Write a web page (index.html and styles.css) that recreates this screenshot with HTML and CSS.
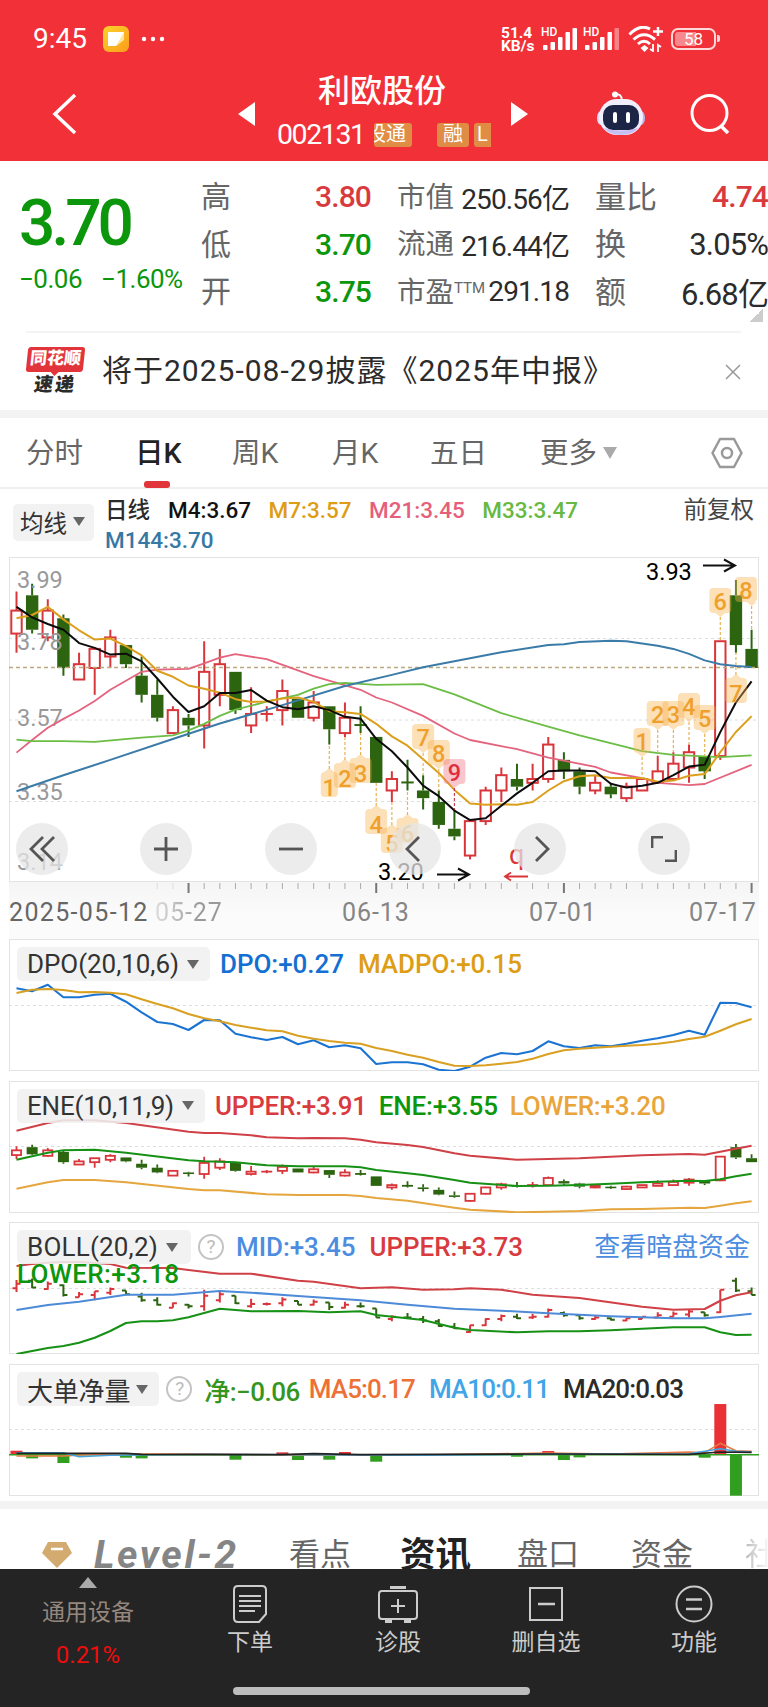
FILE: index.html
```
<!DOCTYPE html>
<html lang="zh-CN">
<head>
  <meta charset="UTF-8">
  <title>利欧股份 002131</title>
  <link rel="stylesheet" href="styles.css">
</head>
<body>

  <header class="top">
    <div class="status">
      <span class="clock">9:45</span>
      <svg class="note" width="26" height="26" viewBox="0 0 26 26">
        <defs><linearGradient id="noteFill" x1="0" y1="0" x2="1" y2="1"><stop offset="0" stop-color="#fbd32c"/><stop offset="1" stop-color="#fb9c1c"/></linearGradient></defs>
        <rect width="26" height="26" rx="6" fill="url(#noteFill)"/>
        <path d="M5 6h16v7L13 20H5z" fill="#fff"/>
        <path d="M21 6v8l-8 6z" fill="#ffe3a0"/>
      </svg>
      <svg width="24" height="6" viewBox="0 0 24 6" fill="#fff"><circle cx="3" cy="3" r="2.2"/><circle cx="12" cy="3" r="2.2"/><circle cx="21" cy="3" r="2.2"/></svg>
      <div class="speed"><span>51.4</span><span>KB/s</span></div>
      <svg width="78" height="26" viewBox="0 0 78 26" fill="#fff">
        <text x="0" y="10" class="hd">HD</text>
        <rect x="2" y="19" width="4.500" height="5" rx="1"/><rect x="9.500" y="16" width="4.500" height="8" rx="1"/><rect x="17" y="11" width="4.500" height="13" rx="1"/><rect x="24.500" y="6" width="4.500" height="18" rx="1"/><rect x="31.500" y="2" width="4.500" height="22" rx="1"/>
        <text x="42" y="10" class="hd">HD</text>
        <rect x="44" y="19" width="4.500" height="5" rx="1"/><rect x="51.500" y="16" width="4.500" height="8" rx="1"/><rect x="59" y="11" width="4.500" height="13" rx="1"/><rect x="66.500" y="6" width="4.500" height="18" rx="1"/><rect x="73.500" y="2" width="4.500" height="22" rx="1" opacity=".4"/>
      </svg>
      <svg class="wifi" width="36" height="26" viewBox="0 0 36 26" fill="none" stroke="#fff" stroke-width="3">
        <path d="M1.500 8.500Q12 -2.500 22 3M5.500 13.500Q16 4 27 13.500M10 18Q16 12.500 22 18"/>
        <path d="M16.500 19l4 3-4 4-4-4z" fill="#fff" stroke="none"/>
        <path d="M25 5.500h10M30 1v9" stroke-width="2.500"/>
        <path d="M25 18v7l-3-2M30 26v-7l3 2" stroke-width="1.800"/>
      </svg>
      <span class="battery"><i>58</i></span>
      <span class="battery-tip"></span>
    </div>

    <div class="nav">
      <svg class="back" width="26" height="42" viewBox="0 0 26 42" fill="none" stroke="#fff" stroke-width="3.500"><path d="M23 2L3 21l20 19"/></svg>
      <svg width="17" height="24" viewBox="0 0 17 24"><path d="M17 0v24L0 12z" fill="#fff"/></svg>
      <div class="stock">
        <h1>利欧股份</h1>
        <div class="code">
          <span>002131</span>
          <b class="tag cut"><i>股通</i></b><b class="tag">融</b><b class="tag last">L</b>
        </div>
      </div>
      <svg width="17" height="24" viewBox="0 0 17 24"><path d="M0 0v24l17-12z" fill="#fff"/></svg>
      <svg class="robot" width="48" height="46" viewBox="0 0 48 46">
        <path d="M17 3q8-1 8 7" fill="none" stroke="#fff" stroke-width="2"/><circle cx="18" cy="3.500" r="3" fill="#fff"/>
        <ellipse cx="4" cy="27" rx="4" ry="7" fill="#dcd8fb"/><ellipse cx="44" cy="27" rx="4" ry="7" fill="#b9b6f5"/>
        <rect x="2" y="8" width="44" height="36" rx="18" fill="#f1eefe"/>
        <path d="M7 37q17 5 34 0-5 7-17 7T7 37z" fill="#c6bdf3"/>
        <rect x="6" y="14" width="36" height="25" rx="10" fill="#1d2547"/>
        <rect x="16" y="21" width="4" height="11" rx="2" fill="#fff"/><rect x="29" y="21" width="4" height="11" rx="2" fill="#fff"/>
      </svg>
      <svg class="search" width="40" height="40" viewBox="0 0 40 40" fill="none" stroke="#fff" stroke-width="3"><circle cx="19.500" cy="19" r="17.500"/><path d="M31 32l7 7" stroke-width="3.500"/></svg>
    </div>
  </header>

  <section class="quote">
    <div class="price down">
      <strong>3.70</strong>
      <p><span>−0.06</span><span>−1.60%</span></p>
    </div>
    <dl class="facts first">
      <div><dt>高</dt><dd class="up">3.80</dd></div>
      <div><dt>低</dt><dd class="down">3.70</dd></div>
      <div><dt>开</dt><dd class="down">3.75</dd></div>
    </dl>
    <dl class="facts middle">
      <div><dt>市值</dt><dd>250.56亿</dd></div>
      <div><dt>流通</dt><dd>216.44亿</dd></div>
      <div><dt>市盈<sup>TTM</sup></dt><dd>291.18</dd></div>
    </dl>
    <dl class="facts end">
      <div><dt>量比</dt><dd class="up">4.74</dd></div>
      <div><dt>换</dt><dd>3.05%</dd></div>
      <div><dt>额</dt><dd>6.68亿</dd></div>
    </dl>
  </section>
  <div class="fold"></div>

  <section class="notice">
    <div class="brand"><b>同花顺</b><i>速递</i></div>
    <p>将于2025-08-29披露《2025年中报》</p>
    <svg width="16" height="16" viewBox="0 0 16 16" stroke="#999" stroke-width="1.500"><path d="M1 1l14 14M15 1L1 15"/></svg>
  </section>

  <nav class="tabs">
    <span>分时</span>
    <span class="on">日K</span>
    <span>周K</span>
    <span>月K</span>
    <span>五日</span>
    <span class="more">更多</span>
    <svg width="32" height="32" viewBox="0 0 32 32" fill="none" stroke="#999" stroke-width="2.500"><path d="M9 2h14l7.500 14L23 30H9L1.500 16z" stroke-linejoin="round"/><circle cx="16" cy="16" r="5"/></svg>
  </nav>

  <section class="averages">
    <span class="pick">均线</span>
    <p>
      <b>日线</b><span class="m4">M4:3.67</span><span class="m7">M7:3.57</span><span class="m21">M21:3.45</span><span class="m33">M33:3.47</span><br>
      <span class="m144">M144:3.70</span>
    </p>
    <span class="adjust">前复权</span>
  </section>

  <main>
    <div class="panel kline">
      <svg id="kline" width="750" height="325"></svg>
      <div class="tools">
        <button><svg width="26" height="26" viewBox="0 0 26 26"><path d="M14 1L2 13l12 12M25 1L13 13l12 12"/></svg></button>
        <button><svg width="26" height="26" viewBox="0 0 26 26"><path d="M13 1v24M1 13h24"/></svg></button>
        <button><svg width="26" height="26" viewBox="0 0 26 26"><path d="M1 13h24"/></svg></button>
        <button><svg width="26" height="26" viewBox="0 0 26 26"><path d="M17 1L5 13l12 12"/></svg></button>
        <button><svg width="26" height="26" viewBox="0 0 26 26"><path d="M9 1l12 12L9 25"/></svg></button>
        <button><svg width="26" height="26" viewBox="0 0 26 26"><path d="M1 12V1h11M25 14v11H14"/></svg></button>
      </div>
    </div>
    <div class="dates">
      <svg id="ticks" width="750" height="14"></svg>
      <div class="days"><b>2025-05-12</b><span class="faded">05-27</span><span>06-13</span><span>07-01</span><span>07-17</span></div>
    </div>

    <div class="panel">
      <svg id="dpo" width="750" height="132"></svg>
      <div class="legend"><span class="pick">DPO(20,10,6)</span><span class="blue">DPO:+0.27</span><span class="m7">MADPO:+0.15</span></div>
    </div>

    <div class="panel">
      <svg id="ene" width="750" height="132"></svg>
      <div class="legend ene"><span class="pick">ENE(10,11,9)</span><span class="up">UPPER:+3.91</span><span class="down">ENE:+3.55</span><span class="amber">LOWER:+3.20</span></div>
    </div>

    <div class="panel">
      <svg id="boll" width="750" height="132"></svg>
      <div class="legend boll"><span class="pick">BOLL(20,2)</span><em>?</em><span class="sky">MID:+3.45</span><span class="up">UPPER:+3.73</span><a>查看暗盘资金</a><span class="down wrap">LOWER:+3.18</span></div>
    </div>

    <div class="panel">
      <svg id="flow" width="750" height="132"></svg>
      <div class="legend flow"><span class="pick">大单净量</span><em>?</em><span class="net">净:−0.06</span><span class="orange">MA5:0.17</span><span class="cyan">MA10:0.11</span><span>MA20:0.03</span></div>
    </div>
  </main>

  <nav class="sections">
    <svg width="30" height="26" viewBox="0 0 30 26"><path d="M6 0h18l6 11-15 15L0 11z" fill="#d3ab70"/><path d="M9 7h12" stroke="#fff" stroke-width="2.500"/></svg>
    <span class="level">Level-2</span>
    <span>看点</span>
    <span class="on">资讯</span>
    <span>盘口</span>
    <span>资金</span>
    <span class="next">社</span>
  </nav>

  <footer>
    <div class="bar">
      <div class="device"><i></i><span>通用设备</span><b>0.21%</b></div>
      <div class="item">
        <svg width="40" height="40" viewBox="0 0 40 40"><path d="M8 2h24q4 0 4 4v24l-7 8H8q-4 0-4-4V6q0-4 4-4zM9 12h22M9 17h22M9 22h22M9 27h16"/></svg>
        <span>下单</span>
      </div>
      <div class="item">
        <svg width="40" height="40" viewBox="0 0 40 40"><path d="M4 7h32q3 0 3 3v22q0 3-3 3H4q-3 0-3-3V10q0-3 3-3zM20 15v14M13 22h14"/><path d="M12 3.500h16M7 37.500h7M26 37.500h7" stroke-width="3"/></svg>
        <span>诊股</span>
      </div>
      <div class="item">
        <svg width="40" height="40" viewBox="0 0 40 40"><path d="M4 4h32v32H4z"/><path d="M12 20h17" stroke-width="2.500"/></svg>
        <span>删自选</span>
      </div>
      <div class="item">
        <svg width="40" height="40" viewBox="0 0 40 40"><circle cx="20" cy="20" r="17.500"/><path d="M12 15.500h16M12 25h16" stroke-width="2.500"/></svg>
        <span>功能</span>
      </div>
    </div>
    <div class="home"></div>
  </footer>

  <script src="script.js"></script>
</body>
</html>
```

FILE: styles.css
```
* {
  box-sizing: border-box;
}

body {
  margin: 0;
  width: 768px;
  height: 1707px;
  overflow: hidden;
  background: #fff;
  color: #2b2b2b;
  font-family: Roboto, "Noto Sans CJK SC", sans-serif;
}

h1, p, dl, dd {
  margin: 0;
}

svg {
  display: block;
  flex: none;
}

.up { color: #d93a3e; }
.down { color: #0b960b; }
.m4 { color: #111; }
.m7 { color: #dd9d14; }
.m21 { color: #e65f7a; }
.m33 { color: #68b93f; }
.m144 { color: #3578a4; }
.blue { color: #1370d2; }
.sky { color: #4c8de0; }
.amber { color: #e9a53a; }
.net { color: #35951f; }
.orange { color: #ed7137; }
.cyan { color: #41a5e8; }

/* header */
.top {
  height: 161px;
  background: #f23038;
  color: #fff;
}

.status {
  display: flex;
  align-items: center;
  height: 77px;
  padding: 0 48px 0 33px;
}

.clock {
  width: 70px;
  font-size: 28px;
}

.note {
  margin-right: 12px;
}

.speed {
  display: flex;
  flex-direction: column;
  width: 35px;
  margin: 2px 5px 0 auto;
  font-size: 15.500px;
  font-weight: 700;
  line-height: 12.500px;
  white-space: nowrap;
}

.hd {
  font-size: 12px;
  font-weight: 500;
}

.wifi {
  margin: 0 7px 0 9px;
}

.battery {
  width: 45px;
  height: 22px;
  padding: 2px;
  border: 2px solid #ffd9da;
  border-radius: 7px;
}

.battery i {
  display: block;
  border-radius: 3px;
  background: linear-gradient(90deg, #f7888d 56%, transparent 56%);
  font-size: 17px;
  font-style: normal;
  line-height: 14px;
  text-align: center;
}

.battery-tip {
  width: 3px;
  height: 7px;
  margin-left: 1px;
  border-radius: 0 2px 2px 0;
  background: #ffd9da;
}

.nav {
  display: flex;
  align-items: center;
  height: 73px;
  padding: 0 38px 0 52px;
}

.back {
  margin-right: 160px;
}

.stock {
  width: 257px;
  padding-left: 22px;
}

.stock h1 {
  padding-left: 41px;
  font-size: 32px;
  font-weight: 500;
  line-height: 36px;
}

.code {
  display: flex;
  align-items: center;
  height: 45px;
  padding-top: 6px;
}

.code span {
  width: 97px;
  font-size: 28.500px;
  letter-spacing: -1.400px;
}

.tag {
  width: 32px;
  height: 24px;
  margin-right: 5px;
  border-radius: 3px;
  background: #e08c45;
  font-size: 20px;
  font-weight: 400;
  line-height: 23px;
  text-align: center;
}

.tag.cut {
  display: flex;
  justify-content: flex-end;
  width: 38px;
  margin-right: 25px;
  padding-right: 6px;
  overflow: hidden;
}

.tag i {
  flex: none;
  font-style: normal;
  white-space: nowrap;
}

.tag.last {
  width: 17px;
  margin: 0;
  border-radius: 3px 0 0 3px;
}

.robot {
  margin: 0 45px 0 69px;
}

/* quote */
.quote {
  display: flex;
  height: 148px;
  padding-top: 12px;
}

.price {
  width: 201px;
  padding: 11px 0 0 19px;
}

.price strong {
  display: block;
  font-size: 64px;
  font-weight: 500;
  line-height: 80px;
  letter-spacing: -4px;
}

.price p {
  display: flex;
  gap: 19px;
  margin-top: -3px;
  font-size: 26px;
  line-height: 36px;
  letter-spacing: -.500px;
  white-space: nowrap;
}

.facts div {
  display: flex;
  justify-content: space-between;
  align-items: center;
  height: 47.500px;
}

.facts dt {
  margin-top: -5px;
  color: #666;
  font-size: 30px;
  white-space: nowrap;
}

.facts dd {
  font-size: 30px;
  font-weight: 500;
  letter-spacing: -.900px;
  white-space: nowrap;
}

.facts.first {
  width: 170px;
}

.facts.middle {
  width: 172px;
  margin-left: 26px;
}

.middle dt {
  font-size: 28.500px;
}

.middle dd {
  font-size: 28px;
  font-weight: 400;
  letter-spacing: -.900px;
}

.facts sup {
  font-size: 15px;
  line-height: 0;
  vertical-align: 9px;
}

.facts.end {
  width: 173px;
  margin-left: 26px;
}

.end dt {
  font-size: 31px;
}

.end dd {
  font-weight: 400;
  font-size: 31px;
}

.end .up {
  font-weight: 500;
  font-size: 30px;
}

.fold {
  width: 13px;
  height: 13px;
  margin-left: 750px;
  background: linear-gradient(135deg, transparent 50%, #ccc 50%);
}

.notice {
  display: flex;
  align-items: center;
  height: 79px;
  margin: 9px 27px 0 26px;
  border-top: 2px solid #f4f4f4;
}

.brand {
  display: flex;
  flex-direction: column;
  align-items: center;
  width: 59px;
  margin-right: 17px;
}

.brand b {
  width: 57px;
  height: 25px;
  border-radius: 3px;
  background: #e2353b;
  color: #fff;
  font-size: 17px;
  font-weight: 900;
  line-height: 23px;
  text-align: center;
  transform: skewX(-6deg);
}

.brand b::after {
  content: "";
  display: block;
  width: 0;
  margin: 1px auto 0;
  border: 5px solid transparent;
  border-top-color: #e2353b;
  border-bottom: 0;
}

.brand i {
  margin-top: 2px;
  font-size: 19px;
  font-style: normal;
  font-weight: 900;
  letter-spacing: 2px;
  line-height: 22px;
  transform: skewX(-8deg);
}

.notice p {
  flex: 1;
  margin-top: -8px;
  font-size: 30px;
  letter-spacing: 1px;
  white-space: nowrap;
}

/* period tabs */
.tabs {
  display: grid;
  grid-template-columns: 109px 97px 100px 98px 110px 171px 32px;
  align-items: center;
  height: 79px;
  padding-left: 26px;
  border-top: 8px solid #f3f3f3;
  border-bottom: 2px solid #f0f0f0;
  color: #666;
  font-size: 28.500px;
}

.tabs span {
  height: 69px;
  line-height: 71px;
}

.tabs .on {
  color: #222;
  font-weight: 500;
}

.tabs .on::after {
  content: "";
  display: block;
  width: 26px;
  height: 7px;
  margin: -8px 0 0 9px;
  border-radius: 3px;
  background: #e2353b;
}

.more::after {
  content: "";
  display: inline-block;
  margin: 0 0 4px 6px;
  border: 7px solid transparent;
  border-top: 12px solid #aaa;
  border-bottom: 0;
}

/* moving averages */
.averages {
  display: flex;
  height: 68px;
  padding: 6px 14px 0 13px;
}

.pick {
  display: flex;
  align-items: center;
  gap: 8px;
  border-radius: 5px;
  background: rgba(240, 240, 240, .88);
  color: #333;
}

.pick::after {
  content: "";
  border: 6px solid transparent;
  border-top: 9px solid #666;
  border-bottom: 0;
}

.averages .pick {
  width: 81px;
  height: 37px;
  margin: 9px 11px 0 0;
  padding: 0 0 2px 7px;
  gap: 6px;
  font-size: 23.500px;
}

.averages p {
  flex: 1;
  font-size: 22.500px;
  font-weight: 500;
  line-height: 30px;
  white-space: nowrap;
}

.averages b {
  margin-right: 18px;
  font-weight: 500;
}

.averages p span {
  margin-right: 17.500px;
}

.adjust {
  color: #444;
  font-size: 23.500px;
  line-height: 30px;
}

/* charts */
main {
  padding: 0 9px;
}

.panel {
  display: grid;
  height: 132px;
  margin-bottom: 9.700px;
}

.panel > * {
  grid-area: 1 / 1;
}

.panel svg text {
  font-size: 23.500px;
}

.kline {
  height: 325px;
  margin: 0;
}

.tools {
  display: flex;
  align-self: end;
  gap: 72.400px;
  padding: 0 0 7px 7px;
}

.tools button {
  display: flex;
  justify-content: center;
  align-items: center;
  width: 52px;
  height: 52px;
  padding: 0;
  border: 0;
  border-radius: 50%;
  background: rgba(230, 230, 230, .75);
}

.tools svg {
  fill: none;
  stroke: #555;
  stroke-width: 2.800;
}

.dates {
  height: 57px;
  background: linear-gradient(#f5f5f5, #fbfbfb 60%);
}

.days {
  display: grid;
  grid-template-columns: 146px 187px 187px 160px 70px;
  color: #858585;
  font-size: 25px;
  line-height: 34px;
  letter-spacing: .900px;
  white-space: nowrap;
}

.days b {
  color: #666;
  font-weight: 400;
  letter-spacing: 1.350px;
}

.faded {
  background: linear-gradient(90deg, #ddd, #999 45px);
  background-clip: text;
  color: transparent;
}

.legend {
  display: flex;
  align-items: center;
  align-self: start;
  height: 34px;
  margin: 8px 0 0 8px;
  gap: 14px;
  font-size: 26px;
  font-weight: 500;
  letter-spacing: -.050px;
  white-space: nowrap;
}

.legend .pick {
  height: 34px;
  margin-right: -4px;
  padding: 0 11px 0 10px;
  font-weight: 400;
}

.legend em {
  width: 26px;
  height: 26px;
  margin: 0 -2px 0 -3px;
  border: 2px solid #c4c4c4;
  border-radius: 50%;
  color: #bbb;
  font-size: 19px;
  font-style: normal;
  font-weight: 400;
  line-height: 22px;
  text-align: center;
}

.ene {
  gap: 12px;
  letter-spacing: -.200px;
}

.ene .pick {
  margin-right: -2px;
}

.boll {
  flex-wrap: wrap;
  height: auto;
  row-gap: 0;
}

.boll .pick {
  width: 174px;
  letter-spacing: .200px;
}

.boll a {
  margin-left: auto;
  margin-right: 9px;
  color: #4c8de0;
  font-weight: 400;
  line-height: 34px;
}

.boll .wrap {
  width: 100%;
  margin-top: -4px;
  letter-spacing: .400px;
  line-height: 28px;
}

.flow {
  letter-spacing: -.900px;
}

.flow .pick {
  letter-spacing: -.200px;
  gap: 6px;
}

.flow .net {
  letter-spacing: -.500px;
  margin-right: -5px;
}

/* content tabs, cut off by the bottom bar */
.sections {
  display: flex;
  align-items: center;
  height: 67.500px;
  margin-top: -4.500px;
  padding: 32px 0 0 42px;
  border-top: 8px solid #f3f3f3;
  overflow: hidden;
  color: #666;
  font-size: 31px;
  white-space: nowrap;
}

.sections span {
  flex: none;
  margin-right: 52px;
  line-height: 36px;
}

.sections .level {
  width: 143px;
  margin-left: 22px;
  color: #858585;
  font-size: 39px;
  font-style: italic;
  font-weight: 700;
  letter-spacing: 2.600px;
}

.sections .on {
  margin: 0 46px 0 -3px;
  color: #222;
  font-size: 35.500px;
  font-weight: 700;
}

.sections .next {
  margin: 0;
  background: linear-gradient(90deg, #bbb, #fff 26px);
  background-clip: text;
  color: transparent;
}

footer {
  height: 138px;
  background: #242424;
  color: #ccc;
}

.bar {
  display: grid;
  grid-template-columns: 176px repeat(4, 148px);
  height: 118px;
  padding-top: 8px;
  font-size: 23px;
}

.device {
  display: flex;
  flex-direction: column;
  align-items: center;
  color: #95877d;
}

.device i {
  margin-bottom: 9px;
  border: 9px solid transparent;
  border-bottom: 11px solid #aaa;
  border-top: 0;
}

.device b {
  margin-top: 12px;
  color: #ee0c0c;
  font-size: 24px;
  font-weight: 400;
}

.device span,
.item span {
  line-height: 32px;
}

.item {
  display: flex;
  flex-direction: column;
  align-items: center;
  gap: 3px;
  padding-top: 7px;
}

.item svg {
  fill: none;
  stroke: #ccc;
  stroke-width: 2;
}

.home {
  width: 297px;
  height: 8px;
  margin-left: 233px;
  border-radius: 4px;
  background: #bdbdbd;
}
```

FILE: script.js
```
const RED = '#d9363b';
const GREEN = '#2c6410';

// open, high, low, close in cents
const bars = [
  [379, 390, 374, 385], [389, 392, 379, 380], [378, 388, 377, 385], [383, 384, 368, 370],
  [367, 374, 367, 371], [370, 375, 363, 375], [373, 380, 370, 378], [376, 376, 370, 371],
  [368, 373, 361, 363], [363, 367, 356, 357], [353, 360, 353, 359], [357, 358, 352, 355],
  [355, 377, 349, 369], [363, 375, 360, 371], [369, 369, 358, 359], [355, 365, 353, 358],
  [358, 360, 356, 358], [359, 367, 355, 364], [362, 362, 357, 357], [357, 364, 356, 361],
  [360, 360, 350, 354], [353, 361, 352, 357], [355.1, 360, 353, 355], [352, 352, 340, 340],
  [338, 343, 335, 341], [340.1, 346, 338, 340], [338, 342, 333, 336], [335, 338, 328, 329],
  [328, 333, 325, 326], [321, 330, 320, 330], [330, 339, 329, 338], [338, 344, 335, 342],
  [341, 345, 338, 339], [340, 345, 338, 341], [341, 352, 340, 350], [346, 348, 341, 343],
  [343, 344, 337, 339], [338, 342, 337, 340], [339, 340, 336, 337], [336, 340, 335, 339],
  [338, 341, 338, 341], [340, 347, 340, 343], [341, 348, 341, 345], [344, 350, 340, 348],
  [347, 347, 341, 343], [347, 377, 346, 377], [389, 393, 374, 376], [375, 380, 370, 370]
];

// closes of the six days before the first visible one
const before = [374, 370, 393, 391, 392, 376];

const x = i => 7.5 + 15.64 * i;

function add(svg, tag, attrs, text) {
  const el = document.createElementNS('http://www.w3.org/2000/svg', tag);
  for (const key in attrs) el.setAttribute(key, attrs[key]);
  if (text) el.textContent = text;
  svg.appendChild(el);
  return el;
}

function frame(svg, lines) {
  const h = +svg.getAttribute('height');
  add(svg, 'rect', { x: .5, y: .5, width: 749, height: h - 1, fill: 'none', stroke: '#e3e3e3' });
  lines.forEach(y => add(svg, 'path', { d: `M0 ${y}H750`, stroke: '#dedede', 'stroke-dasharray': '3 3' }));
}

function line(svg, points, y, color, width = 2.1) {
  const d = points.map(([i, v]) => `${x(i).toFixed(1)},${y(v).toFixed(1)}`).join(' ');
  add(svg, 'polyline', { points: d, fill: 'none', stroke: color, 'stroke-width': width, 'stroke-linejoin': 'round' });
}

function candles(svg, y, w, stroke) {
  bars.forEach(([open, high, low, close], i) => {
    const top = y(Math.max(open, close));
    const bottom = y(Math.min(open, close));
    const color = close >= open ? RED : GREEN;
    add(svg, 'path', { d: `M${x(i)} ${y(high)}V${top}M${x(i)} ${bottom}V${y(low)}`, stroke: color, 'stroke-width': stroke });
    if (bottom - top < 1) {
      add(svg, 'path', { d: `M${x(i) - w / 2} ${top}h${w}`, stroke: color, 'stroke-width': stroke });
    } else if (close >= open) {
      add(svg, 'rect', { x: x(i) - w / 2 + stroke / 2, y: top, width: w - stroke, height: bottom - top, fill: '#fff', stroke: color, 'stroke-width': stroke });
    } else {
      add(svg, 'rect', { x: x(i) - w / 2, y: top, width: w, height: bottom - top, fill: color });
    }
  });
}

function average(n) {
  const closes = before.concat(bars.map(b => b[3]));
  return bars.map((b, i) => {
    const part = closes.slice(i + 7 - n, i + 7);
    return [i, part.reduce((a, c) => a + c, 0) / n];
  });
}

// ---- K line ----
const kline = document.getElementById('kline');
const ky = c => 23 + (393 - c) * 3.827;

frame(kline, [81.5, 163, 244.5]);
candles(kline, ky, 12.4, 2);
add(kline, 'path', { d: 'M0 110.5H750', stroke: '#bda77c', 'stroke-width': 1.4, 'stroke-dasharray': '4 3' });

[['3.99', 31], ['3.78', 93], ['3.57', 169], ['3.35', 243], ['3.14', 313]].forEach(([t, y]) =>
  add(kline, 'text', { x: 8, y, fill: '#999' }, t));

line(kline, [[0, 347.9], [1, 351.2], [2, 354.4], [3, 356.7], [4, 358.9], [5, 361.4], [6, 364.3], [8, 369], [9, 369.6], [11, 369.8], [12, 371.2], [13, 372.7], [14, 373.6], [16, 372.3], [19, 367.9], [22, 364.3], [23, 362.3], [24, 361], [26, 357.5], [28, 352.9], [29, 351.2], [32, 348.8], [34, 346.6], [37, 344.2], [38, 342.7], [40, 341.2], [41, 340], [43, 339.4], [44, 339.7], [47, 344.7]], ky, '#e4647e', 1.8);
line(kline, [[0, 351.3], [1, 350.9], [3, 350.9], [5, 350.7], [8, 351.8], [10, 352.4], [11, 353.7], [12, 355.4], [13, 357.5], [14, 359.1], [16, 361.2], [18, 363], [19, 364.6], [20, 365.8], [21, 366.1], [23, 365.6], [26, 365.8], [28, 363.1], [31, 358.2], [34, 354.7], [36, 352.4], [39, 349.3], [40, 348.3], [42, 347.3], [45, 346.7], [47, 347.2]], ky, '#6cbd45', 1.8);
line(kline, [[0, 337.8], [3, 342], [6, 346], [9.8, 351.2], [13, 355.5], [17, 360.3], [21, 365.3], [24, 368.2], [26, 370.2], [31, 374.1], [34, 376], [35, 376.2], [36, 376.8], [38, 377.1], [39, 377], [41, 375.8], [42, 375], [43, 373.7], [44, 372], [45, 371], [46, 370.5], [47, 370.3]], ky, '#3b7ba8', 2);
line(kline, average(7), ky, '#dc9f1c', 2);
line(kline, average(4), ky, '#0c0c0c', 2);

// countdown marks: index, number, top of the box, above or below the bar
const marks = [
  [20, 1, 215, 'below'], [21, 2, 206, 'below'], [22, 3, 201, 'below'], [23, 4, 252, 'below'],
  [24, 5, 271, 'below'], [25, 6, 261, 'below'], [26, 7, 167, 'above'], [27, 8, 183, 'above'],
  [28, 9, 202, 'above'], [40, 1, 171, 'above'], [41, 2, 144, 'above'], [42, 3, 144, 'above'],
  [43, 4, 136, 'above'], [44, 5, 148, 'above'], [45, 6, 31, 'above'], [46, 7, 121, 'below'],
  [47, 8, 20, 'above']
];
marks.forEach(([i, n, y, side]) => {
  const last = n === 9;
  const fill = last ? '#f07080' : '#f7b24a';
  const w = n === 1 ? 17 : 22;
  const cx = x(i);
  // the last box is kept inside the frame
  const mid = Math.min(cx, 737);
  const g = add(kline, 'g', {});
  const tip = side === 'above' ? y + 29 : y - 3;
  const end = side === 'above' ? ky(bars[i][1]) : ky(bars[i][2]);
  add(g, 'path', { d: `M${cx} ${tip}V${end}`, stroke: last ? '#c8434b' : '#e8b355', 'stroke-width': 1.2, 'stroke-dasharray': '3 2' });
  add(g, 'rect', { x: mid - w / 2, y, width: w, height: 25, rx: 4, fill, opacity: .4 });
  add(g, 'path', { d: side === 'above' ? `M${cx - 5} ${y + 25}h10l-5 4z` : `M${cx - 5} ${y}h10l-5-4z`, fill, opacity: .4 });
  add(g, 'text', { x: mid, y: y + (side === 'above' ? 22 : 24), fill: last ? '#e02f3c' : '#efa02c', 'text-anchor': 'middle', 'font-weight': 500 }, n);
});

add(kline, 'text', { x: 637, y: 23 }, '3.93');
add(kline, 'path', { d: 'M694 8.500h31M715 2.500l11 6-11 6', fill: 'none', stroke: '#111', 'stroke-width': 2 });
add(kline, 'text', { x: 369, y: 323 }, '3.20');
add(kline, 'path', { d: 'M428 317.500h31M449 311.500l11 6-11 6', fill: 'none', stroke: '#111', 'stroke-width': 2 });
add(kline, 'text', { x: 500, y: 307, fill: RED, style: 'font-size: 27px' }, 'q');
add(kline, 'path', { d: 'M519 319.500h-23M502 315.500l-6 4 6 4', fill: 'none', stroke: RED, 'stroke-width': 1.8 });

const ticks = document.getElementById('ticks');
for (let i = 9; i < 48; i++) {
  const big = i % 12 === 11;
  add(ticks, 'path', { d: `M${x(i)} 1v${big ? 10 : 6}`, stroke: i < 11 ? '#ddd' : big ? '#777' : '#aaa', 'stroke-width': big ? 2 : 1 });
}

// ---- DPO ----
const dpo = document.getElementById('dpo');
const dy = v => v / 3 - 9;
frame(dpo, [66.5]);
const dpoLine = [175, 184, 164, 202, 202, 194, 191, 215, 247, 276, 282, 300, 270, 271, 311, 322, 330, 321, 343, 331, 352, 346, 355, 402, 397, 397, 403, 419, 423, 410, 383, 369, 373, 363, 334, 349, 354, 346, 349, 341, 332, 325, 315, 302, 314, 218, 219, 232];
const maLine = [189, 179, 177, 180, 187, 186, 188, 193, 208, 222, 235, 252, 265, 274, 285, 293, 301, 304, 317, 326, 333, 338, 341, 354, 363, 374, 383, 396, 407, 408, 406, 401, 396, 386, 372, 361, 356, 353, 350, 347, 345, 341, 335, 327, 320, 302, 283, 267];
line(dpo, dpoLine.map((v, i) => [i, v]), dy, '#1b74d2');
line(dpo, maLine.map((v, i) => [i, v]), dy, '#d9a021');

// ---- ENE ----
const ene = document.getElementById('ene');
const ey = v => v / 3 - 151;
frame(ene, [65.5]);
candles(ene, c => 63 + (393 - c) * .79, 11, 1.8);
line(ene, [[0, 602], [2, 579], [3, 571], [5, 571], [7, 579], [11, 605], [12, 609], [13, 609], [15, 616], [16, 622], [18, 625], [19, 624], [21, 625], [22, 629], [23, 637], [25, 645], [26, 651], [28, 670], [29, 677], [32, 689], [34, 687], [36, 685], [38, 680], [40, 676], [43, 672], [44, 674], [45, 665], [46, 656], [47, 647]], ey, '#cf4147');
line(ene, [[0, 689], [2, 668], [3, 661], [5, 659], [7, 668], [11, 691], [12, 694], [14, 697], [16, 706], [18, 709], [21, 709], [22, 712], [23, 720], [25, 730], [26, 735], [28, 750], [29, 758], [32, 768], [34, 767], [36, 765], [38, 761], [40, 757], [43, 752], [44, 753], [45, 748], [46, 739], [47, 731]], ey, '#169116');
line(ene, [[0, 776], [2, 757], [3, 750], [5, 750], [7, 757], [11, 777], [12, 781], [13, 781], [16, 793], [18, 795], [21, 795], [22, 798], [23, 804], [25, 812], [28, 833], [29, 839], [32, 847], [34, 845], [36, 843], [38, 838], [40, 837], [43, 833], [44, 834], [45, 827], [46, 820], [47, 814]], ey, '#e5a63f');

// ---- BOLL ----
const boll = document.getElementById('boll');
const by = v => v / 3 - 12;
const bp = c => 55.7 + (393 - c) * .753;
frame(boll, [66.5]);
bars.forEach(([open, high, low, close], i) => {
  add(boll, 'path', { d: `M${x(i)} ${bp(high)}V${bp(low)}M${x(i) - 4} ${bp(open)}h4M${x(i)} ${bp(close)}h4`, stroke: close >= open ? RED : GREEN, 'stroke-width': 2 });
});
line(boll, [[0, 168], [1, 162], [2, 158], [3, 156], [4, 156], [6, 162], [7, 173], [10, 174], [11, 180], [13, 191], [15, 191], [18, 212], [19, 215], [22, 235], [24, 232], [26, 239], [28, 238], [29, 235], [31, 239], [33, 254], [36, 264], [40, 290], [42, 299], [44, 297], [45, 272], [46, 256], [47, 247]], by, '#cf4147');
line(boll, [[0, 300], [2, 285], [4, 275], [7, 254], [10, 254], [13, 243], [15, 248], [18, 258], [22, 271], [25, 284], [28, 296], [31, 302], [34, 310], [38, 319], [42, 325], [44, 325], [45, 321], [47, 311]], by, '#4d8bd8');
line(boll, [[0, 432], [2, 414], [3, 408], [4, 398], [5, 383], [6, 363], [7, 339], [8, 334], [9, 334], [10, 331], [11, 322], [13, 296], [15, 304], [18, 303], [20, 307], [22, 304], [23, 315], [26, 330], [28, 353], [29, 360], [32, 367], [34, 364], [36, 364], [38, 361], [42, 352], [44, 352], [45, 367], [46, 375], [47, 374]], by, '#169116');

// ---- net volume of large orders ----
const flow = document.getElementById('flow');
const fy = v => v / 3 - 154;
frame(flow, [65.5]);
const net = { 0: 12, 1: -11, 3: -25, 7: -9, 8: -11, 14: -15, 17: 7, 18: -16, 20: -15, 21: 8, 23: -21, 32: -6, 34: 11, 35: -16, 36: -8, 44: -9, 45: 152, 46: -123 };
for (const i in net) {
  const h = Math.abs(net[i]) / 3;
  add(flow, 'rect', { x: x(i) - 6, y: net[i] > 0 ? 90.7 - h : 90.7, width: 12, height: h, fill: net[i] > 0 ? '#e83035' : '#319e20' });
}
add(flow, 'path', { d: 'M0 90.700H750', stroke: '#319e20', 'stroke-width': 1.6 });
line(flow, [[0, 738], [3, 738], [5, 733], [12, 731], [18, 735], [26, 735], [34, 729], [38, 732], [43, 726], [44, 728], [45, 700], [46, 722], [47, 724]], fy, '#e77b43', 1.5);
line(flow, [[0, 728], [3, 728], [4, 740], [6, 736], [12, 733], [26, 736], [34, 732], [43, 731], [45, 716], [46, 724], [47, 726]], fy, '#45a4de', 1.5);
line(flow, [[0, 730], [7, 730], [8, 733], [17, 734], [19, 731], [22, 734], [34, 732], [43, 733], [45, 726], [47, 727]], fy, '#222', 1.7);
```
